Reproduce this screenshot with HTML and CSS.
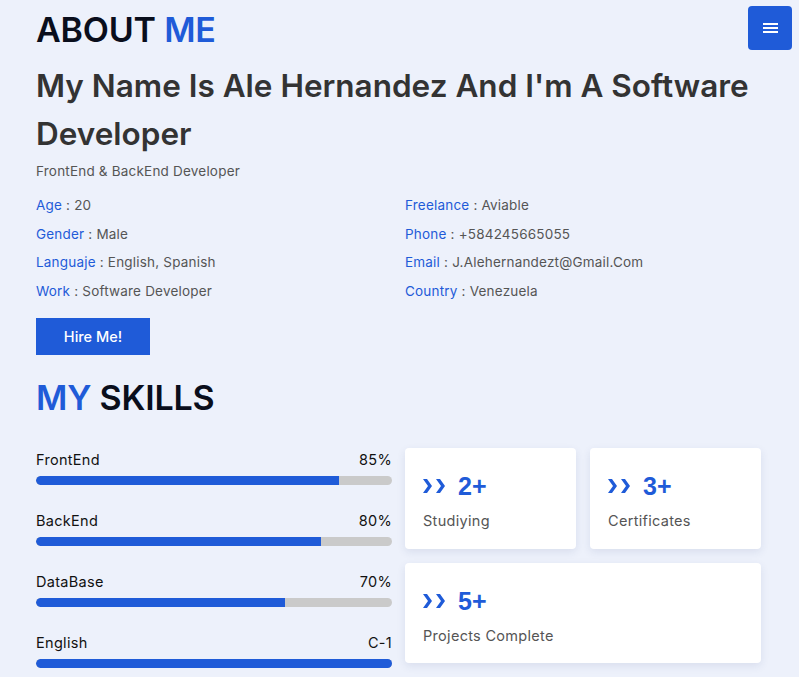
FILE: index.html
```html
<!DOCTYPE html>
<html lang="en">
<head>
<meta charset="utf-8">
<title>About Me</title>
<link rel="stylesheet" href="styles.css">
</head>
<body>
<button class="menu-btn" aria-label="Menu">
  <span></span><span></span><span></span>
</button>
<main class="page">
  <section class="about">
    <h1 class="heading">ABOUT <span class="accent">ME</span></h1>
    <h2 class="name">My Name Is Ale Hernandez And I'm A Software Developer</h2>
    <p class="role">FrontEnd &amp; BackEnd Developer</p>
    <div class="info">
      <div class="info-col">
        <p class="info-row"><span class="label">Age</span> : 20</p>
        <p class="info-row"><span class="label">Gender</span> : Male</p>
        <p class="info-row"><span class="label">Languaje</span> : English, Spanish</p>
        <p class="info-row"><span class="label">Work</span> : Software Developer</p>
      </div>
      <div class="info-col">
        <p class="info-row"><span class="label">Freelance</span> : Aviable</p>
        <p class="info-row"><span class="label">Phone</span> : +584245665055</p>
        <p class="info-row"><span class="label">Email</span> : J.Alehernandezt@Gmail.Com</p>
        <p class="info-row"><span class="label">Country</span> : Venezuela</p>
      </div>
    </div>
    <button class="hire-btn">Hire Me!</button>
  </section>

  <section class="skills">
    <h1 class="heading"><span class="accent">MY</span> SKILLS</h1>
    <div class="skills-grid">
      <div class="bars">
        <div class="skill">
          <div class="skill-head"><span>FrontEnd</span><span>85%</span></div>
          <div class="track"><div class="fill" style="width:85%"></div></div>
        </div>
        <div class="skill">
          <div class="skill-head"><span>BackEnd</span><span>80%</span></div>
          <div class="track"><div class="fill" style="width:80%"></div></div>
        </div>
        <div class="skill">
          <div class="skill-head"><span>DataBase</span><span>70%</span></div>
          <div class="track"><div class="fill" style="width:70%"></div></div>
        </div>
        <div class="skill">
          <div class="skill-head"><span>English</span><span>C-1</span></div>
          <div class="track"><div class="fill" style="width:100%"></div></div>
        </div>
      </div>
      <div class="cards">
        <div class="card">
          <div class="card-num"><svg class="chev" viewBox="0 0 22 14" width="22" height="14"><path d="M0 0 H4 L9 7 L4 14 H0 L5 7Z"/><path d="M13 0 H17 L22 7 L17 14 H13 L18 7Z"/></svg><span>2+</span></div>
          <p class="card-text">Studiying</p>
        </div>
        <div class="card">
          <div class="card-num"><svg class="chev" viewBox="0 0 22 14" width="22" height="14"><path d="M0 0 H4 L9 7 L4 14 H0 L5 7Z"/><path d="M13 0 H17 L22 7 L17 14 H13 L18 7Z"/></svg><span>3+</span></div>
          <p class="card-text">Certificates</p>
        </div>
        <div class="card wide">
          <div class="card-num"><svg class="chev" viewBox="0 0 22 14" width="22" height="14"><path d="M0 0 H4 L9 7 L4 14 H0 L5 7Z"/><path d="M13 0 H17 L22 7 L17 14 H13 L18 7Z"/></svg><span>5+</span></div>
          <p class="card-text">Projects Complete</p>
        </div>
      </div>
    </div>
  </section>
</main>
</body>
</html>
```

FILE: styles.css
```css
* { box-sizing: border-box; }
html, body { margin: 0; padding: 0; }
body {
  background: #edf1fb;
  font-family: "Inter", "Open Sans", sans-serif;
  color: #555;
  overflow: hidden;
}
.page {
  padding: 8px 38px 0 36px;
}
.menu-btn {
  position: absolute;
  top: 6px;
  right: 7px;
  width: 44px;
  height: 44px;
  border: 0;
  border-radius: 4px;
  background: #1f5bd8;
  display: flex;
  flex-direction: column;
  align-items: center;
  justify-content: center;
  gap: 2.5px;
  padding: 0;
}
.menu-btn span {
  display: block;
  width: 15px;
  height: 1.6px;
  background: #fff;
}
.heading {
  margin: 0;
  font-size: 34px;
  font-weight: 600;
  color: #0a0e1c;
  line-height: 44px;
  letter-spacing: -0.2px;
}
.accent { color: #1f5bd8; }
.name {
  margin: 10px 0 0;
  font-size: 31.5px;
  font-weight: 600;
  color: #333;
  line-height: 48px;
}
.role {
  margin: 4px 0 0;
  font-size: 13.5px;
  letter-spacing: 0.2px;
  color: #555;
  line-height: 18px;
}
.info {
  display: grid;
  grid-template-columns: 1fr 1fr;
  column-gap: 13px;
  margin-top: 11px;
}
.info-row {
  margin: 0;
  font-size: 13.5px;
  letter-spacing: 0.2px;
  line-height: 28.7px;
  color: #555;
}
.label { color: #1f5bd8; }
.hire-btn {
  margin-top: 12px;
  width: 114px;
  height: 37px;
  border: 0;
  background: #1f5bd8;
  color: #fff;
  font-family: inherit;
  font-size: 14.5px;
  font-weight: 500;
  padding: 0;
}
.skills { margin-top: 21px; }
.skills-grid {
  display: grid;
  grid-template-columns: 1fr 1fr;
  column-gap: 13px;
  margin-top: 30px;
}
.skill { margin-bottom: 26px; }
.skill-head {
  display: flex;
  justify-content: space-between;
  font-size: 14.5px;
  letter-spacing: 0.3px;
  color: #111;
  line-height: 20px;
}
.track {
  margin-top: 6px;
  height: 9px;
  border-radius: 5px;
  background: #cacaca;
  overflow: hidden;
}
.fill {
  height: 100%;
  background: #1f5bd8;
  border-radius: 5px 0 0 5px;
}
.cards {
  display: grid;
  grid-template-columns: 1fr 1fr;
  gap: 14px;
  align-content: start;
  margin-top: -2px;
}
.card {
  background: #fff;
  border-radius: 4px;
  height: 101px;
  padding: 22px 18px 0;
  box-shadow: 0 3px 8px rgba(40, 60, 120, 0.10);
}
.card.wide { grid-column: 1 / 3; height: 100px; }
.card-num {
  display: flex;
  align-items: center;
  gap: 13px;
  color: #1f5bd8;
  font-family: "Liberation Sans", Arial, sans-serif;
  font-weight: 700;
  font-size: 25px;
  line-height: 32px;
}
.chev { fill: #1f5bd8; }
.card-text {
  margin: 9px 0 0;
  font-size: 14.5px;
  letter-spacing: 0.3px;
  color: #555;
  line-height: 20px;
}
```
